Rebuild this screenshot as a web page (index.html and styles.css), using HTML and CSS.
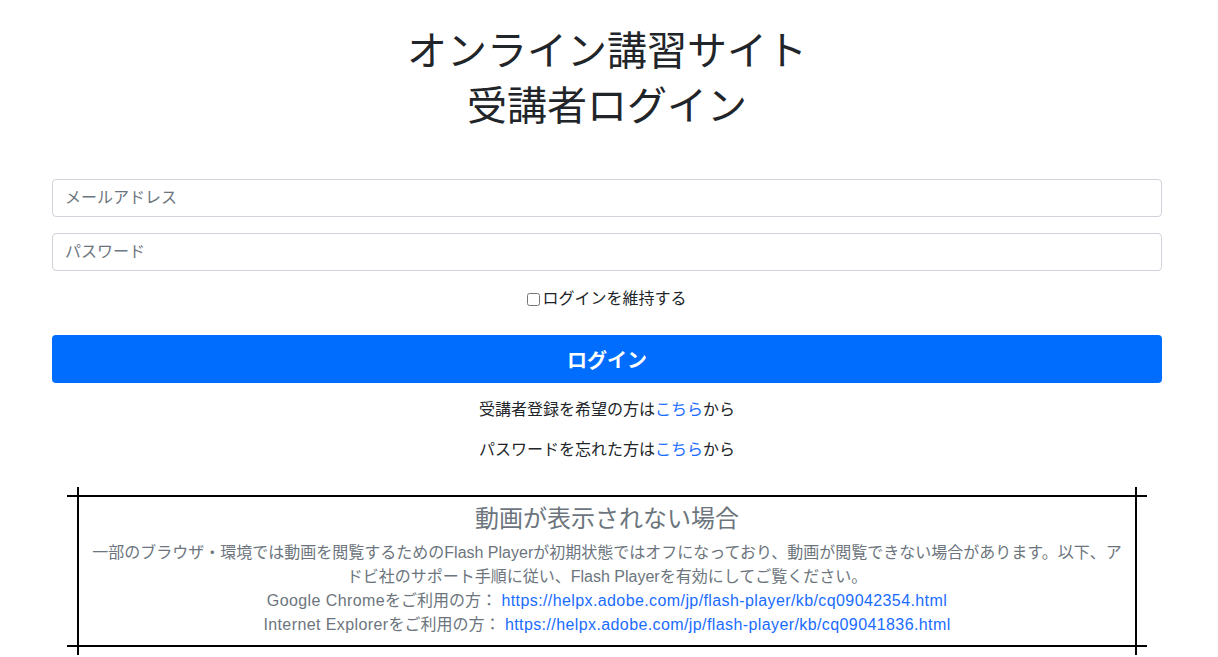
FILE: index.html
```html
<!DOCTYPE html>
<html lang="ja">
<head>
<meta charset="utf-8">
<title>受講者ログイン</title>
<link rel="stylesheet" href="styles.css">
</head>
<body>
<div class="page">
  <h1 class="title">オンライン講習サイト<br>受講者ログイン</h1>
  <form class="login-form">
    <input class="field" type="email" placeholder="メールアドレス">
    <input class="field" type="password" placeholder="パスワード">
    <div class="remember"><label><input type="checkbox" class="check">ログインを維持する</label></div>
    <button type="button" class="btn-login">ログイン</button>
  </form>
  <p class="help">受講者登録を希望の方は<a href="#">こちら</a>から</p>
  <p class="help">パスワードを忘れた方は<a href="#">こちら</a>から</p>
  <div class="notice">
    <div class="notice-frame">
      <div class="notice-body">
        <h2 class="notice-title">動画が表示されない場合</h2>
        <p class="notice-text">一部のブラウザ・環境では動画を閲覧するためのFlash Playerが初期状態ではオフになっており、動画が閲覧できない場合があります。以下、ア<br>ドビ社のサポート手順に従い、Flash Playerを有効にしてご覧ください。<br><span class="lat">Google Chrome</span>をご利用の方： <a class="lat" href="#">https://helpx.adobe.com/jp/flash-player/kb/cq09042354.html</a><br><span class="lat">Internet Explorer</span>をご利用の方： <a class="lat" href="#">https://helpx.adobe.com/jp/flash-player/kb/cq09041836.html</a></p>
      </div>
    </div>
  </div>
</div>
</body>
</html>
```
FILE: styles.css
```css
html, body {
  margin: 0;
  padding: 0;
  background: #fff;
}
body {
  font-family: "Liberation Sans", "Noto Sans CJK JP", sans-serif;
  font-size: 16px;
  line-height: 24px;
  color: #212529;
}
.page {
  width: 1110px;
  margin: 0 0 0 52px;
  padding-bottom: 20px;
}
.title {
  margin: 24px 0 0;
  font-size: 40px;
  line-height: 55px;
  font-weight: 400;
  text-align: center;
  color: #212529;
}
.login-form {
  margin-top: 45px;
  display: flex;
  flex-direction: column;
}
.field {
  box-sizing: border-box;
  height: 38px;
  margin: 0 0 16px;
  padding: 6px 12px;
  border: 1px solid #ced4da;
  border-radius: 4px;
  font-family: inherit;
  font-size: 16px;
  color: #495057;
}
.field::placeholder {
  color: #6c757d;
}
.remember {
  text-align: center;
  line-height: 24px;
  margin: 0 0 24px;
  font-size: 16px;
}
.check {
  width: 13px;
  height: 13px;
  margin: 0 2px 0 0;
  vertical-align: -2px;
}
.btn-login {
  height: 48px;
  border: none;
  border-radius: 4px;
  background: #006dff;
  color: #fff;
  font-family: inherit;
  font-size: 20px;
  font-weight: 700;
  cursor: pointer;
}
.help {
  margin: 0;
  text-align: center;
  font-size: 16px;
}
.help:first-of-type {
  margin-top: 15px;
}
.help + .help {
  margin-top: 16px;
}
a {
  color: #1a6cff;
  text-decoration: none;
}
.notice {
  margin: 25px 15px 0;
  padding: 0 10px;
}
.notice-frame {
  border-left: 2px solid #000;
  border-right: 2px solid #000;
  padding: 8px 0;
}
.notice-body {
  margin: 0 -12px;
  border-top: 2px solid #000;
  border-bottom: 2px solid #000;
  padding: 7px 12px 8px;
  text-align: center;
  color: #6c757d;
}
.notice-title {
  margin: 0 0 8px;
  font-size: 24px;
  line-height: 29px;
  font-weight: 400;
}
.notice-text {
  margin: 0;
  font-size: 16px;
  line-height: 24px;
}
.lat {
  letter-spacing: 0.4px;
}
```
